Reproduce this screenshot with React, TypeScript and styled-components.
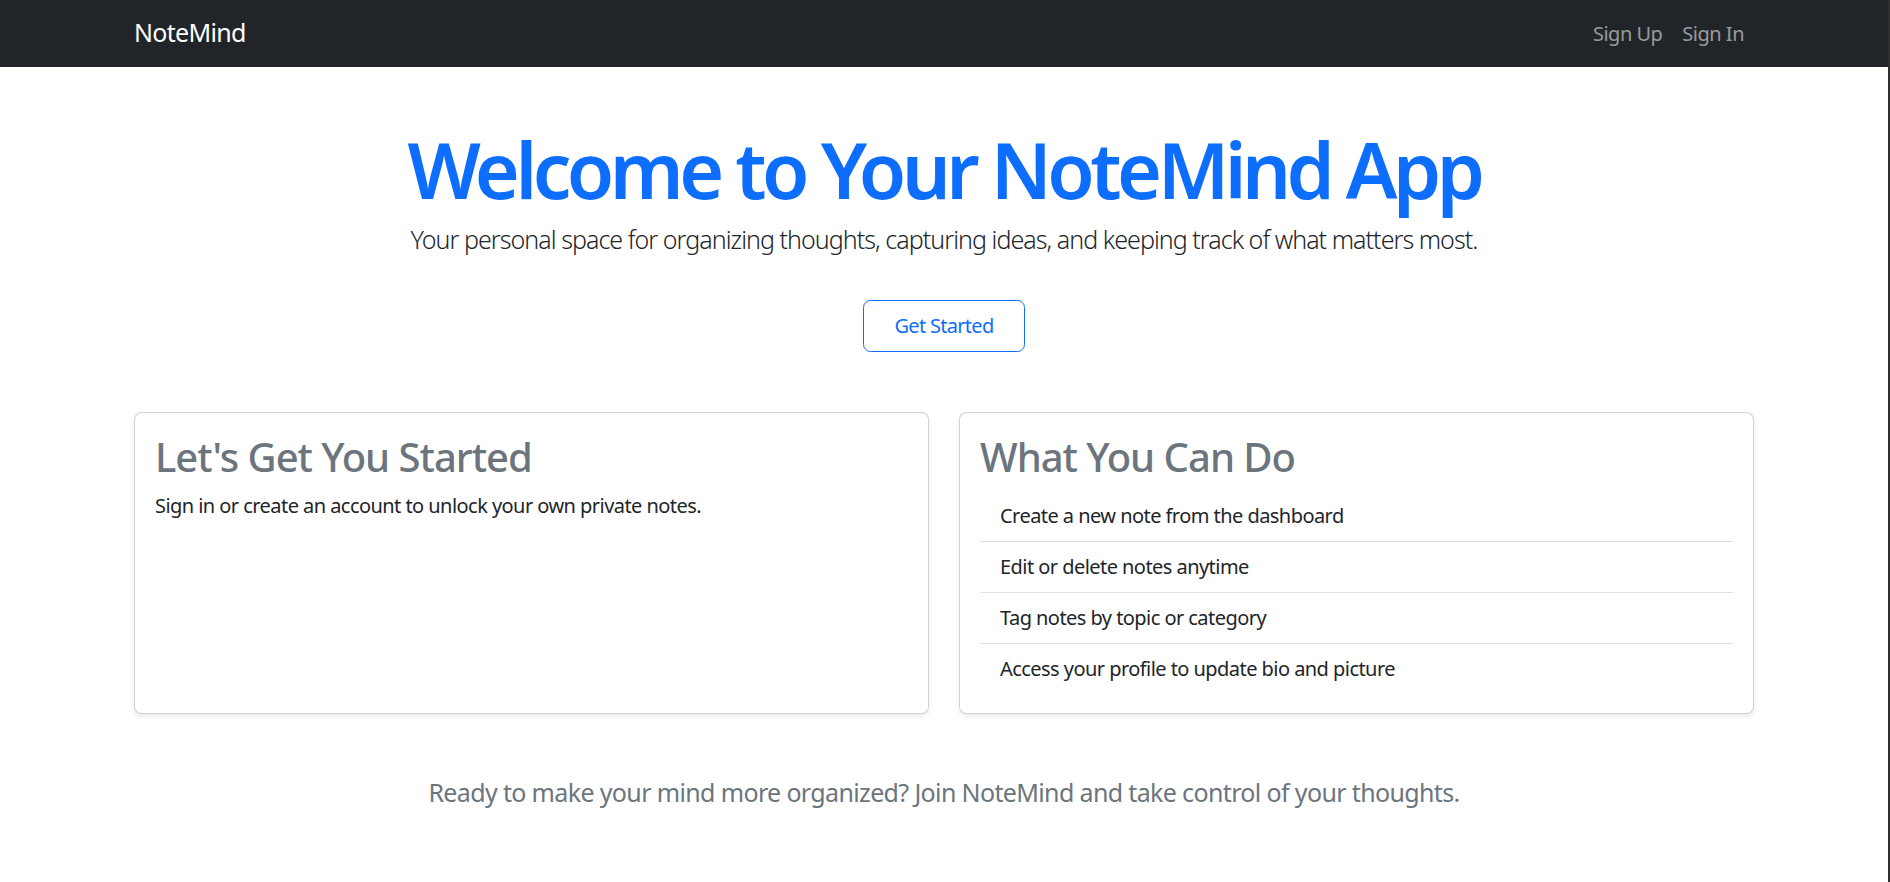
import React from "react";
import styled, { createGlobalStyle } from "styled-components";

const GlobalStyle = createGlobalStyle`
  html, body { margin: 0; padding: 0; background: #fff; }
  body {
    font-family: "Noto Sans", "Open Sans", "Liberation Sans", sans-serif;
    color: #212529;
    -webkit-font-smoothing: antialiased;
  }
  * { box-sizing: border-box; }
`;

const Frame = styled.div`
  min-height: 100vh;
  border-right: 2px solid #2f3032;
`;

const Container = styled.div`
  width: 1620px;
  margin: 0 auto;
`;

const NavBar = styled.nav`
  background: #212529;
  height: 67px;
`;

const NavInner = styled(Container)`
  height: 100%;
  display: flex;
  align-items: center;
  justify-content: space-between;
`;

const Brand = styled.a`
  color: #fff;
  font-size: 25px;
  line-height: 37.5px;
  letter-spacing: -0.7px;
  text-decoration: none;
  padding-bottom: 2px;
`;

const NavList = styled.ul`
  display: flex;
  list-style: none;
  margin: 0;
  padding: 0;
`;

const NavLink = styled.a`
  display: block;
  padding: 10px;
  font-size: 20px;
  line-height: 30px;
  letter-spacing: -0.5px;
  color: rgba(255, 255, 255, 0.55);
  text-decoration: none;
`;

const Hero = styled.header`
  padding-top: 55px;
  text-align: center;
`;

const Title = styled.h1`
  margin: 0 0 3px;
  font-size: 77px;
  line-height: 96px;
  font-weight: 600;
  letter-spacing: -4.5px;
  color: #0d6efd;
`;

const Lead = styled.p`
  margin: 0;
  font-size: 25px;
  line-height: 37.5px;
  font-weight: 300;
  letter-spacing: -0.95px;
  color: #212529;
`;

const OutlineButton = styled.a`
  display: inline-block;
  margin-top: 41px;
  padding: 10px 30px;
  font-size: 20px;
  line-height: 30px;
  letter-spacing: -0.7px;
  color: #0d6efd;
  border: 1px solid #0d6efd;
  border-radius: 7.5px;
  text-decoration: none;
`;

const CardRow = styled.section`
  display: grid;
  grid-template-columns: 1fr 1fr;
  gap: 30px;
  margin-top: 60px;
`;

const Card = styled.div`
  border: 1px solid rgba(0, 0, 0, 0.175);
  border-radius: 7.5px;
  box-shadow: 0 2.5px 5px rgba(0, 0, 0, 0.075);
  padding: 20px 20px 19px;
  background: #fff;
`;

const CardTitle = styled.h2`
  margin: 0 0 10px;
  font-size: 40px;
  line-height: 48px;
  font-weight: 500;
  letter-spacing: -1px;
  color: #6c757d;
`;

const CardText = styled.p`
  margin: 0;
  font-size: 20px;
  line-height: 30px;
  letter-spacing: -0.55px;
`;

const FeatureList = styled.ul`
  list-style: none;
  margin: 0;
  padding: 0;
`;

const FeatureItem = styled.li`
  padding: 10px 20px;
  font-size: 20px;
  line-height: 30px;
  letter-spacing: -0.55px;
  border-bottom: 1px solid #dee2e6;
  &:last-child { border-bottom: 0; }
`;

const Closing = styled.p`
  margin: 60px 0 0;
  text-align: center;
  font-size: 25px;
  line-height: 37.5px;
  letter-spacing: -0.64px;
  color: #6c757d;
`;

const features = [
  "Create a new note from the dashboard",
  "Edit or delete notes anytime",
  "Tag notes by topic or category",
  "Access your profile to update bio and picture",
];

export default function App() {
  return (
    <>
      <GlobalStyle />
      <Frame>
        <NavBar>
          <NavInner>
            <Brand href="#">NoteMind</Brand>
            <NavList>
              <li><NavLink href="#">Sign Up</NavLink></li>
              <li><NavLink href="#">Sign In</NavLink></li>
            </NavList>
          </NavInner>
        </NavBar>
        <Container>
          <Hero>
            <Title>Welcome to Your NoteMind App</Title>
            <Lead>
              Your personal space for organizing thoughts, capturing ideas, and keeping track of what matters most.
            </Lead>
            <OutlineButton href="#">Get Started</OutlineButton>
          </Hero>
          <CardRow>
            <Card>
              <CardTitle>Let's Get You Started</CardTitle>
              <CardText>Sign in or create an account to unlock your own private notes.</CardText>
            </Card>
            <Card>
              <CardTitle>What You Can Do</CardTitle>
              <FeatureList>
                {features.map((f) => (
                  <FeatureItem key={f}>{f}</FeatureItem>
                ))}
              </FeatureList>
            </Card>
          </CardRow>
          <Closing>
            Ready to make your mind more organized? Join NoteMind and take control of your thoughts.
          </Closing>
        </Container>
      </Frame>
    </>
  );
}
